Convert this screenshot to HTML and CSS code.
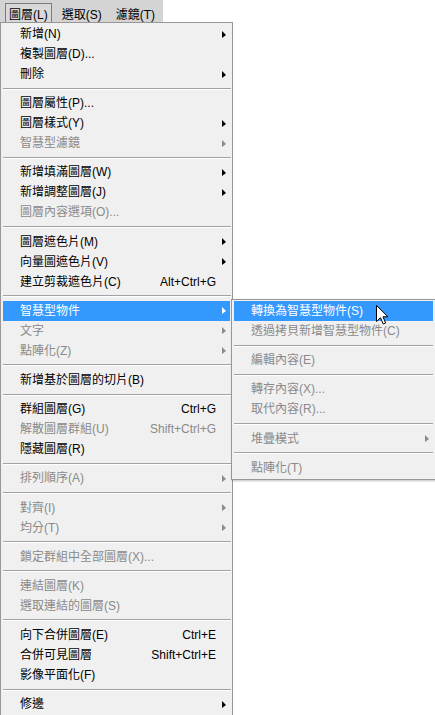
FILE: index.html
```html
<!DOCTYPE html>
<html lang="zh-Hant">
<head>
<meta charset="utf-8">
<title>圖層選單</title>
<link rel="stylesheet" href="styles.css">
</head>
<body>
<div class="screen">
  <nav class="menubar">
    <span class="bar-item pressed">圖層(L)</span>
    <span class="bar-item">選取(S)</span>
    <span class="bar-item">濾鏡(T)</span>
  </nav>

  <div class="menu main">
    <div class="item"><span class="label">新增(N)</span><span class="cell"><i class="tri"></i></span></div>
    <div class="item"><span class="label">複製圖層(D)...</span><span class="cell"></span></div>
    <div class="item"><span class="label">刪除</span><span class="cell"><i class="tri"></i></span></div>
    <div class="sep"></div>
    <div class="item"><span class="label">圖層屬性(P)...</span><span class="cell"></span></div>
    <div class="item"><span class="label">圖層樣式(Y)</span><span class="cell"><i class="tri"></i></span></div>
    <div class="item off"><span class="label">智慧型濾鏡</span><span class="cell"><i class="tri"></i></span></div>
    <div class="sep"></div>
    <div class="item"><span class="label">新增填滿圖層(W)</span><span class="cell"><i class="tri"></i></span></div>
    <div class="item"><span class="label">新增調整圖層(J)</span><span class="cell"><i class="tri"></i></span></div>
    <div class="item off"><span class="label">圖層內容選項(O)...</span><span class="cell"></span></div>
    <div class="sep"></div>
    <div class="item"><span class="label">圖層遮色片(M)</span><span class="cell"><i class="tri"></i></span></div>
    <div class="item"><span class="label">向量圖遮色片(V)</span><span class="cell"><i class="tri"></i></span></div>
    <div class="item"><span class="label">建立剪裁遮色片(C)</span><span class="key">Alt+Ctrl+G</span><span class="cell"></span></div>
    <div class="sep"></div>
    <div class="item active"><span class="label">智慧型物件</span><span class="cell"><i class="tri"></i></span></div>
    <div class="item off"><span class="label">文字</span><span class="cell"><i class="tri"></i></span></div>
    <div class="item off"><span class="label">點陣化(Z)</span><span class="cell"><i class="tri"></i></span></div>
    <div class="sep"></div>
    <div class="item"><span class="label">新增基於圖層的切片(B)</span><span class="cell"></span></div>
    <div class="sep"></div>
    <div class="item"><span class="label">群組圖層(G)</span><span class="key">Ctrl+G</span><span class="cell"></span></div>
    <div class="item off"><span class="label">解散圖層群組(U)</span><span class="key">Shift+Ctrl+G</span><span class="cell"></span></div>
    <div class="item"><span class="label">隱藏圖層(R)</span><span class="cell"></span></div>
    <div class="sep"></div>
    <div class="item off"><span class="label">排列順序(A)</span><span class="cell"><i class="tri"></i></span></div>
    <div class="sep"></div>
    <div class="item off"><span class="label">對齊(I)</span><span class="cell"><i class="tri"></i></span></div>
    <div class="item off"><span class="label">均分(T)</span><span class="cell"><i class="tri"></i></span></div>
    <div class="sep"></div>
    <div class="item off"><span class="label">鎖定群組中全部圖層(X)...</span><span class="cell"></span></div>
    <div class="sep"></div>
    <div class="item off"><span class="label">連結圖層(K)</span><span class="cell"></span></div>
    <div class="item off"><span class="label">選取連結的圖層(S)</span><span class="cell"></span></div>
    <div class="sep"></div>
    <div class="item"><span class="label">向下合併圖層(E)</span><span class="key">Ctrl+E</span><span class="cell"></span></div>
    <div class="item"><span class="label">合併可見圖層</span><span class="key">Shift+Ctrl+E</span><span class="cell"></span></div>
    <div class="item"><span class="label">影像平面化(F)</span><span class="cell"></span></div>
    <div class="sep"></div>
    <div class="item"><span class="label">修邊</span><span class="cell"><i class="tri"></i></span></div>
  </div>

  <div class="menu sub">
    <div class="item active"><span class="label">轉換為智慧型物件(S)</span><span class="cell"></span></div>
    <div class="item off"><span class="label">透過拷貝新增智慧型物件(C)</span><span class="cell"></span></div>
    <div class="sep"></div>
    <div class="item off"><span class="label">編輯內容(E)</span><span class="cell"></span></div>
    <div class="sep"></div>
    <div class="item off"><span class="label">轉存內容(X)...</span><span class="cell"></span></div>
    <div class="item off"><span class="label">取代內容(R)...</span><span class="cell"></span></div>
    <div class="sep"></div>
    <div class="item off"><span class="label">堆疊模式</span><span class="cell"><i class="tri"></i></span></div>
    <div class="sep"></div>
    <div class="item off"><span class="label">點陣化(T)</span><span class="cell"></span></div>
  </div>

  <svg class="cursor" width="13" height="20" viewBox="0 0 13 20" aria-hidden="true">
    <path d="M0.5 0.5 L0.5 16.5 L4.5 12.7 L7.2 19 L9.6 18 L7 11.8 L12 11.8 Z" fill="#fff" stroke="#000" stroke-width="1" stroke-linejoin="miter"/>
  </svg>
</div>
</body>
</html>
```

FILE: styles.css
```css
html, body {
  margin: 0;
  padding: 0;
  background: #ffffff;
  overflow: hidden;
}

.screen {
  position: relative;
  width: 435px;
  height: 715px;
  overflow: hidden;
  font-family: "Liberation Sans", "Noto Sans CJK TC", sans-serif;
  font-size: 12px;
  color: #000;
}

.menubar {
  display: flex;
  gap: 6px;
  width: 163px;
  height: 22px;
  box-sizing: border-box;
  padding: 3px 0 0 5px;
  background: #d4d4d4;
}

.bar-item {
  display: flex;
  align-items: center;
  height: 19px;
  box-sizing: border-box;
  padding: 1px 3px 0;
  border: 1px solid transparent;
  border-bottom: 0;
  white-space: nowrap;
}

.bar-item.pressed {
  border-color: #7b7b7b;
  background: #d9d9d9;
}

.menu {
  background: #f0f0f0;
  border: 1px solid #979797;
  box-sizing: border-box;
  padding: 1px 2px;
}

.main {
  width: 233px;
}

.sub {
  position: absolute;
  left: 231px;
  top: 299px;
  width: 205px;
  box-shadow: 1px 1px 2px rgba(0, 0, 0, 0.25);
}

.item {
  display: flex;
  align-items: center;
  height: 20px;
  padding-left: 17px;
  white-space: nowrap;
  line-height: 20px;
}

.label {
  flex: 1;
}

.key {
  text-align: right;
}

.cell {
  display: flex;
  justify-content: flex-end;
  align-items: center;
  width: 14px;
  height: 20px;
  box-sizing: border-box;
  padding-right: 4px;
}

.tri {
  display: block;
  width: 0;
  height: 0;
  border-left: 4px solid #000;
  border-top: 4px solid transparent;
  border-bottom: 3px solid transparent;
}

.item.off {
  color: #8a8a8a;
}

.item.off .tri {
  border-left-color: #8a8a8a;
}

.item.active {
  background: #3399ff;
  color: #ffffff;
}

.item.active .tri {
  border-left-color: #ffffff;
}

.sep {
  height: 9.2px;
  display: flex;
  align-items: center;
}

.sep::before {
  content: "";
  flex: 1;
  height: 1px;
  background: #a2a2a2;
  border-bottom: 1px solid #ffffff;
}

.main .sep {
  margin-right: -1px;
}

.cursor {
  position: absolute;
  left: 376px;
  top: 305px;
}
```
